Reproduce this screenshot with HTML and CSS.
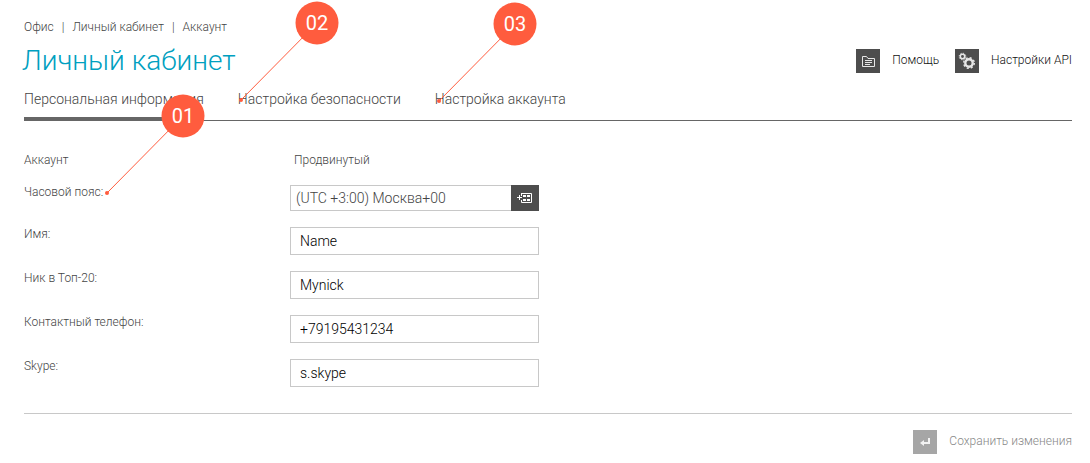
FILE: index.html
```html
<!DOCTYPE html>
<html lang="ru">
<head>
<meta charset="utf-8">
<title>Личный кабинет</title>
<link rel="stylesheet" href="styles.css">
</head>
<body>
<div class="page">
  <header class="header">
    <div class="heading">
      <nav class="crumbs" aria-label="Навигация">
        <a href="#">Офис</a><span>|</span><a href="#">Личный кабинет</a><span>|</span><a href="#">Аккаунт</a>
      </nav>
      <h1 class="title">Личный кабинет</h1>
    </div>
    <div class="actions">
      <a class="action" href="#">
        <svg class="icon" viewBox="0 0 24 24" aria-hidden="true">
          <path d="M6.500 17.500V7.500H10.500L12 9.500H18.500V17.500Z" fill="none" stroke="#e6e6e6"/>
          <path d="M9 11.500H16M9 13.500H16M9 15.500H14" stroke="#e6e6e6"/>
        </svg>
        <span>Помощь</span>
      </a>
      <a class="action" href="#">
        <svg class="icon" viewBox="0 0 24 24" aria-hidden="true">
          <g fill="none" stroke="#e6e6e6">
            <circle cx="7.500" cy="7.500" r="2.200" stroke-width="1.500"/>
            <circle cx="7.500" cy="7.500" r="3.300" stroke-width="1" stroke-dasharray="1.300 1.292"/>
            <circle cx="14" cy="14" r="3.700" stroke-width="2.400"/>
            <circle cx="14" cy="14" r="5.300" stroke-width="1.400" stroke-dasharray="2.100 2.063"/>
          </g>
        </svg>
        <span>Настройки API</span>
      </a>
    </div>
  </header>

  <nav class="tabs" aria-label="Разделы">
    <a class="tab tab-active" href="#" aria-current="page">Персональная информация</a>
    <a class="tab" href="#">Настройка безопасности</a>
    <a class="tab" href="#">Настройка аккаунта</a>
  </nav>

  <form class="form">
    <div class="fields">
      <span class="label">Аккаунт</span>
      <span class="plan">Продвинутый</span>
      <label class="label" for="zone">Часовой пояс:</label>
      <div class="picker">
        <input class="picker-input" id="zone" type="text" value="(UTC +3:00) Москва+00" readonly>
        <button class="picker-button" type="button" aria-label="Выбрать">
          <svg viewBox="0 0 28 26" width="28" height="26" aria-hidden="true">
            <path d="M10.500 8.500H20.500V17.500H10.500V15M10.500 8V11M6 12.500H11M8.500 10V15" fill="none" stroke="#fff"/>
            <path d="M12 10H15V12H12ZM16 10H19V12H16ZM12 14H15V16H12ZM16 14H19V16H16Z" fill="#fff"/>
          </svg>
        </button>
      </div>
      <label class="label" for="name">Имя:</label>
      <input class="input" id="name" type="text" value="Name">
      <label class="label" for="nick">Ник в Топ-20:</label>
      <input class="input" id="nick" type="text" value="Mynick">
      <label class="label" for="phone">Контактный телефон:</label>
      <input class="input" id="phone" type="tel" value="+79195431234">
      <label class="label" for="skype">Skype:</label>
      <input class="input" id="skype" type="text" value="s.skype">
    </div>
    <div class="footer">
      <button class="save" type="submit">
        <svg class="icon icon-muted" viewBox="0 0 24 24" aria-hidden="true">
          <path d="M16 8V13H9" fill="none" stroke="#f2f2f2" stroke-width="2"/>
          <path d="M7 13L11 10V16Z" fill="#f2f2f2"/>
        </svg>
        <span>Сохранить изменения</span>
      </button>
    </div>
  </form>

  <svg class="callout callout-1" width="101" height="102" viewBox="0 0 101 102">
    <path d="M3 99L79 22"/><circle cx="3" cy="99" r="2"/><circle cx="79" cy="22" r="21.500"/>
    <text x="79" y="29">01</text>
  </svg>
  <svg class="callout callout-2" width="101" height="102" viewBox="0 0 101 102">
    <path d="M3 99L79 22"/><circle cx="3" cy="99" r="2"/><circle cx="79" cy="22" r="21.500"/>
    <text x="79" y="29">02</text>
  </svg>
  <svg class="callout callout-3" width="101" height="102" viewBox="0 0 101 102">
    <path d="M3 99L79 22"/><circle cx="3" cy="99" r="2"/><circle cx="79" cy="22" r="21.500"/>
    <text x="79" y="29">03</text>
  </svg>
</div>
</body>
</html>
```
FILE: styles.css
```css
* {
  box-sizing: border-box;
}

body {
  margin: 0;
  background: #fff;
  color: #444;
  font: 300 12px/16px Roboto, "Noto Sans", sans-serif;
}

a {
  color: inherit;
  text-decoration: none;
}

input,
button {
  font-family: inherit;
  font-weight: inherit;
  border-radius: 0;
}

.page {
  position: relative;
  padding: 19px 18px 0 24px;
}

.header {
  display: flex;
  justify-content: space-between;
  align-items: flex-end;
}

.crumbs {
  display: flex;
  gap: 8px;
}

.title {
  margin: 8px 0 0 -2px;
  color: #00a0c0;
  font-size: 28px;
  line-height: 36px;
  font-weight: 300;
}

.actions {
  display: flex;
  gap: 16px;
  padding-bottom: 6px;
}

.action,
.save {
  display: flex;
  gap: 12px;
  color: #111;
}

.action span,
.save span {
  padding-top: 3px;
}

.icon {
  display: block;
  width: 24px;
  height: 24px;
  background: #4d4d4d;
}

.icon-muted {
  background: #a6a6a6;
}

.tabs {
  display: flex;
  gap: 34px;
  margin-top: 10px;
  border-bottom: 1px solid #666;
}

.tab {
  height: 32px;
  margin-bottom: -1px;
  font-size: 14px;
  line-height: 20px;
}

.tab-active {
  border-bottom: 4px solid #666;
}

.fields {
  display: grid;
  grid-template-columns: 266px 249px;
  row-gap: 16px;
  padding: 32px 0 26px;
}

.label,
.plan {
  line-height: 14px;
}

.plan {
  height: 16px;
  padding-left: 4px;
}

.input,
.picker {
  width: 100%;
  border: 1px solid #c8c8c8;
}

.input {
  height: 28px;
  padding: 0 9px;
  color: #000;
  font-size: 14px;
}

.picker {
  display: flex;
  height: 26px;
  border-right: 0;
}

.picker-input {
  flex: 1;
  min-width: 0;
  padding: 0 5px;
  border: 0;
  color: #444;
  font-size: 14px;
}

.picker-button {
  width: 28px;
  height: 26px;
  margin: -1px 0;
  padding: 0;
  border: 0;
  background: #4d4d4d;
}

.picker-button svg {
  display: block;
}

.footer {
  display: flex;
  justify-content: flex-end;
  padding: 16px 0 8px;
  border-top: 1px solid #c8c8c8;
}

.save {
  padding: 0;
  border: 0;
  background: none;
  color: #888;
  font-size: 12px;
  line-height: 16px;
}

.callout {
  position: absolute;
  pointer-events: none;
  fill: #ff5c3e;
}

.callout path {
  stroke: #ff5c3e;
}

.callout text {
  fill: #fff;
  font-size: 20px;
  font-weight: 400;
  text-anchor: middle;
}

.callout-1 {
  left: 104px;
  top: 94px;
}

.callout-2 {
  left: 238px;
  top: 1px;
}

.callout-3 {
  left: 436px;
  top: 2px;
}
```
